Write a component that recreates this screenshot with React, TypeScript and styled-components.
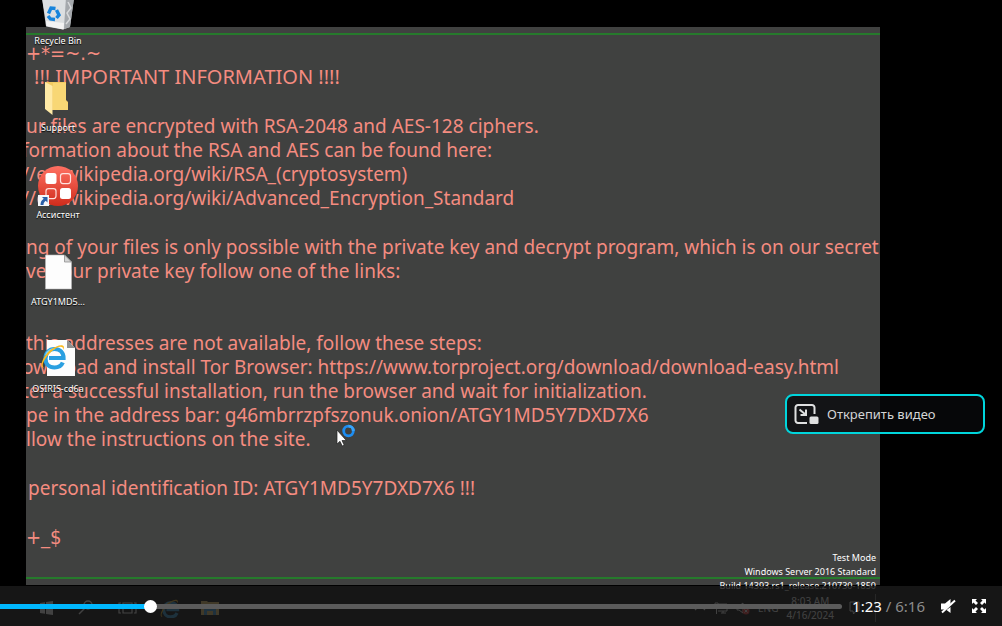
import React, { useState } from 'react';
import styled, { createGlobalStyle } from 'styled-components';

const GlobalStyle = createGlobalStyle`
  * { box-sizing: border-box; }
  body {
    margin: 0;
    background: #000;
    font-family: "Noto Sans", "Open Sans", sans-serif;
  }
`;

const Player = styled.main`
  position: relative;
  display: flex;
  flex-direction: column;
  min-height: 100vh;
  overflow: hidden;
  padding: 27px 122px 0 26px;
  background: #000;
`;

const Wallpaper = styled.section`
  position: relative;
  flex: 1;
  padding-top: 6px;
  padding-bottom: 6px;
  background: #404140;
  display: flex;
  flex-direction: column;
`;

const NoteFrame = styled.div`
  flex: 1;
  overflow: hidden;
  padding-top: 6px;
  border-top: 2px solid #267a2c;
  border-bottom: 2px solid #267a2c;
`;

const Paragraph = styled.p<{ $gap?: 'line' | 'double' }>`
  margin: ${(p) => (p.$gap === 'double' ? '48px' : p.$gap === 'line' ? '25px' : '0')} 0 0;
  color: #f58c80;
  font-size: 19px;
  line-height: 24px;
  white-space: nowrap;
`;

const Line = styled.span<{ $cut?: boolean; $indent?: boolean; $kind?: 'heading' | 'symbols' }>`
  display: block;
  margin-left: ${(p) => (p.$cut ? '-4px' : '0')};
  padding-left: ${(p) => (p.$kind === 'heading' ? '8px' : p.$indent ? '2px' : '0')};
  font-family: ${(p) => (p.$kind === 'symbols' ? '"DejaVu Sans Condensed", sans-serif' : 'inherit')};
  font-size: ${(p) => (p.$kind ? '20px' : 'inherit')};
`;

const Watermark = styled.div`
  position: absolute;
  right: 4px;
  bottom: -8px;
  color: #fff;
  font-size: 9px;
  line-height: 14px;
  text-align: right;
`;

const DesktopIcons = styled.ul`
  position: absolute;
  top: -8px;
  left: 26px;
  width: 64px;
  margin: 0;
  padding: 0;
  list-style: none;
  display: flex;
  flex-direction: column;
  gap: 32px;
`;

const DesktopIcon = styled.li`
  display: flex;
  flex-direction: column;
  align-items: center;
  gap: 3px;
  color: #fff;
  font-size: 9px;
  line-height: 12px;
  white-space: nowrap;
  text-shadow: 0 1px 1px #000;
`;

const Pointer = styled.svg`
  position: absolute;
  top: 424px;
  left: 336px;
`;

const Taskbar = styled.div`
  display: flex;
  align-items: center;
  height: 41px;
  padding: 5px 4px 0 10px;
  color: #fff;
`;

const TaskIcons = styled.div`
  display: flex;
  gap: 20px;
  flex: 1;
`;

const Tray = styled.div`
  display: flex;
  align-items: center;
  gap: 8px;
  padding-right: 15px;
  border-right: 1px solid #666;
  font-size: 10px;
`;

const Clock = styled.div`
  font-size: 10px;
  line-height: 14px;
  text-align: center;
`;

const Controls = styled.div`
  position: absolute;
  left: 0;
  right: 0;
  bottom: 0;
  height: 40px;
  display: flex;
  align-items: center;
  padding-right: 15px;
  background: rgba(26, 26, 26, 0.83);
`;

const Seek = styled.input<{ $played: number }>`
  appearance: none;
  flex: 1;
  min-width: 0;
  height: 14px;
  margin: 0 10px 0 0;
  background: transparent;
  cursor: pointer;

  &::-webkit-slider-runnable-track {
    height: 5px;
    border-radius: 0 3px 3px 0;
    background: linear-gradient(to right, #00b8ff ${(p) => p.$played}%, #5b5b5b ${(p) => p.$played}%);
  }
  &::-webkit-slider-thumb {
    appearance: none;
    width: 13px;
    height: 13px;
    margin-top: -4px;
    border-radius: 50%;
    background: #fff;
  }
`;

const Time = styled.div`
  color: #8c8c8c;
  font-size: 15px;
  line-height: 20px;
  white-space: nowrap;
`;

const Elapsed = styled.span`
  color: #fff;
`;

const IconButton = styled.button`
  display: flex;
  margin: 0 0 0 15px;
  padding: 0;
  border: 0;
  background: none;
  color: #fff;
  cursor: pointer;
`;

const UnpinButton = styled.button`
  position: absolute;
  top: 394px;
  right: 17px;
  width: 200px;
  height: 40px;
  display: flex;
  align-items: center;
  gap: 8px;
  padding: 0 6px;
  border: 2px solid #00d5dc;
  border-radius: 8px;
  background: rgba(8, 9, 11, 0.8);
  color: #d4d5d6;
  font-family: inherit;
  font-size: 13px;
  line-height: 20px;
  cursor: pointer;
`;

const BinIcon = () => (
  <svg width="40" height="40" viewBox="0 0 40 40" aria-hidden="true">
    <path d="M4 6h32l-4 29-7 2.500-17-3z" fill="#c9cccf" />
    <path d="M4 6h24l-2 31-17-3z" fill="#dcdfe1" />
    <path d="M28 6h8l-4 29-6 2z" fill="#a4a8ac" />
    <path d="M8 29l18 2-.5 6.500L8.500 34z" fill="#f3f3f3" />
    <path d="M30 10l3 6-4 5 3 6-4 5" fill="none" stroke="#d7d9db" strokeWidth="1.500" />
    <g fill="none" stroke="#1684dc" strokeWidth="3.400">
      <path d="M10.500 21.500l2.500-5.500 4.500.5" />
      <path d="M18.500 18l2.500 5-2.500 3" />
      <path d="M17 27.500l-4.500-.5-2.500-3" />
    </g>
  </svg>
);

const FolderIcon = () => (
  <svg width="40" height="40" viewBox="0 0 40 40" aria-hidden="true">
    <path d="M7 3h21v18l2 2v8H13z" fill="#f3cb62" />
    <path d="M15 4h13v18l2 2v7H15z" fill="#f8d775" />
    <path d="M7 3l7.500 4v29L7 30z" fill="#ffeaa6" />
  </svg>
);

const AssistantIcon = () => (
  <svg width="40" height="40" viewBox="0 0 40 40" aria-hidden="true">
    <defs>
      <linearGradient id="assistant" x1="0" y1="0" x2="0" y2="1">
        <stop offset="0" stopColor="#ff7062" />
        <stop offset="1" stopColor="#cf2c1c" />
      </linearGradient>
    </defs>
    <circle cx="20" cy="20" r="20" fill="url(#assistant)" />
    <rect x="7.500" y="7" width="11" height="11" rx="2.500" fill="#fff" />
    <rect x="22" y="22" width="11" height="11" rx="2.500" fill="#fff" />
    <g fill="none" stroke="#ffe0dc" strokeWidth="1.200">
      <rect x="22.500" y="7.600" width="10" height="10" rx="2.500" />
      <rect x="8" y="22.600" width="10" height="10" rx="2.500" />
    </g>
    <rect x="0" y="29" width="11" height="11" fill="#f5f7fa" />
    <path d="M4 31h5.500v5.500L7.700 34.700C6 36 5.500 37 5.500 39H2.500c0-3 1-4.800 3.200-6.300z" fill="#2a5fa8" />
  </svg>
);

const FileIcon = () => (
  <svg width="40" height="40" viewBox="0 0 40 40" aria-hidden="true">
    <path d="M7.500 2h19l7 7v27h-26z" fill="#fdfdfd" stroke="#b8b8b8" strokeWidth=".6" />
    <path d="M26.500 2v7h7z" fill="#d5d5d5" stroke="#8f8f8f" strokeWidth=".8" />
  </svg>
);

const EMark = () => (
  <>
    <path d="M8 20h14.500c0-5.500-3.500-9-9-9S4.500 15 4.500 20.500 8 29.500 13.500 29.500c4 0 7-2 8.300-5" fill="none" stroke="#2a9fe0" strokeWidth="4.200" />
    <path d="M5 17c1.500-4 4.500-6 8.500-6" fill="none" stroke="#7bd0f5" strokeWidth="2" />
    <path d="M3 29.500c-6 .5 0-13 7-18S25 5 22.500 12c0-5-6-4-12.500 2S-.5 28 3 29.500z" fill="#fbb91c" />
  </>
);

const HtmlFileIcon = () => (
  <svg width="40" height="40" viewBox="0 0 40 40" aria-hidden="true">
    <path d="M9 0h20l8 8v28H9z" fill="#fdfdfd" />
    <path d="M29 0v8h8z" fill="#8f8f8f" />
    <g transform="translate(3 -2)">
      <EMark />
    </g>
  </svg>
);

const desktopItems = [
  { label: 'Recycle Bin', icon: <BinIcon /> },
  { label: 'Support', icon: <FolderIcon /> },
  { label: 'Ассистент', icon: <AssistantIcon /> },
  { label: 'ATGY1MD5...', icon: <FileIcon /> },
  { label: 'OSIRIS-cd6a', icon: <HtmlFileIcon /> },
];

export default function App() {
  const [position, setPosition] = useState(174);

  return (
    <>
      <GlobalStyle />
      <Player>
        <Wallpaper>
          <NoteFrame>
            <Paragraph>
              <Line $kind="symbols">+*=~.~</Line>
              <Line $kind="heading">!!! IMPORTANT INFORMATION !!!!</Line>
            </Paragraph>
            <Paragraph $gap="line">
              <Line>ur files are encrypted with RSA-2048 and AES-128 ciphers.</Line>
              <Line $cut>formation about the RSA and AES can be found here:</Line>
              <Line $cut>//en.wikipedia.org/wiki/RSA_(cryptosystem)</Line>
              <Line $cut>//en.wikipedia.org/wiki/Advanced_Encryption_Standard</Line>
            </Paragraph>
            <Paragraph $gap="line">
              <Line>ng of your files is only possible with the private key and decrypt program, which is on our secret</Line>
              <Line>ve your private key follow one of the links:</Line>
            </Paragraph>
            <Paragraph $gap="double">
              <Line>this addresses are not available, follow these steps:</Line>
              <Line $cut>ownload and install Tor Browser: https://www.torproject.org/download/download-easy.html</Line>
              <Line $cut>ter a successful installation, run the browser and wait for initialization.</Line>
              <Line>pe in the address bar: g46mbrrzpfszonuk.onion/ATGY1MD5Y7DXD7X6</Line>
              <Line>llow the instructions on the site.</Line>
            </Paragraph>
            <Paragraph $gap="line">
              <Line $indent>personal identification ID: ATGY1MD5Y7DXD7X6 !!!</Line>
            </Paragraph>
            <Paragraph $gap="line">
              <Line $kind="symbols">+_$</Line>
            </Paragraph>
          </NoteFrame>
          <Watermark>
            <div>Test Mode</div>
            <div>Windows Server 2016 Standard</div>
            <div>Build 14393.rs1_release.210730-1850</div>
          </Watermark>
        </Wallpaper>

        <Taskbar>
          <TaskIcons>
            <svg width="21" height="20" viewBox="0 0 21 20" fill="#fff" aria-hidden="true">
              <path d="M4 5l5-.8v5.300H4zM10 4l7-1v6.500h-7zM4 10.500h5v5.300L4 15zM10 10.500h7V17l-7-1z" />
            </svg>
            <svg width="21" height="20" viewBox="0 0 21 20" fill="none" stroke="#fff" strokeWidth="1.500" aria-hidden="true">
              <circle cx="11" cy="7" r="4" />
              <path d="M8 10l-6 6" />
            </svg>
            <svg width="21" height="20" viewBox="0 0 21 20" fill="none" stroke="#fff" strokeWidth="1.200" aria-hidden="true">
              <path d="M5 5h9v10H5zM3 5H1v10h2M16 5h2v10h-2" />
            </svg>
            <svg width="21" height="20" viewBox="-1 5 26 26" aria-hidden="true">
              <EMark />
            </svg>
            <svg width="21" height="20" viewBox="0 0 21 20" aria-hidden="true">
              <path d="M1 3h6l1 1h11v13H1z" fill="#f5d06a" />
              <path d="M4 17v-7h12v7h-3v-4H7v4z" fill="#3aa0e8" />
            </svg>
          </TaskIcons>
          <Tray>
            <svg width="12" height="16" viewBox="0 0 12 16" fill="none" stroke="#fff" strokeWidth="1.200" aria-hidden="true">
              <path d="M1 10l5-5 5 5" />
            </svg>
            <svg width="14" height="16" viewBox="0 0 14 16" fill="none" stroke="#fff" aria-hidden="true">
              <path d="M4 4h9v7H4M7 13h5M9 11v2M1 3v5h3V3zM2.500 8v6" />
            </svg>
            <svg width="14" height="16" viewBox="0 0 14 16" fill="none" stroke="#fff" aria-hidden="true">
              <path d="M1 6h2l4-3v10l-4-3H1z" />
              <circle cx="10" cy="11" r="3.500" fill="#f03030" stroke="none" />
              <path d="M8.500 9.500l3 3m0-3l-3 3" />
            </svg>
            <span>ENG</span>
            <Clock>
              <div>8:03 AM</div>
              <div>4/16/2024</div>
            </Clock>
            <svg width="18" height="16" viewBox="0 0 18 16" fill="none" stroke="#fff" aria-hidden="true">
              <path d="M8 2h9v9h-3l-2.500 3-.5-3H8z" />
            </svg>
          </Tray>
        </Taskbar>

        <DesktopIcons>
          {desktopItems.map((item) => (
            <DesktopIcon key={item.label}>
              {item.icon}
              <span>{item.label}</span>
            </DesktopIcon>
          ))}
        </DesktopIcons>

        <Pointer width="20" height="24" viewBox="0 0 20 24" aria-hidden="true">
          <path d="M1 6v14l3-2.700L6.200 22l2-.9L6 16.500h4.300z" fill="#fff" stroke="#222" strokeWidth=".7" />
          <circle cx="12.500" cy="7" r="4.800" fill="none" stroke="#1d8df2" strokeWidth="2.800" />
          <path d="M12.500 2.200a4.800 4.800 0 0 1 4.800 4.800" fill="none" stroke="#38a4fb" strokeWidth="2.800" />
        </Pointer>

        <UnpinButton type="button">
          <svg width="26" height="24" viewBox="0 0 26 24" fill="none" stroke="#dfe0e0" strokeWidth="2" aria-hidden="true">
            <path d="M14 21H5a2.500 2.500 0 0 1-2.500-2.500v-13A2.500 2.500 0 0 1 5 3h14a2.500 2.500 0 0 1 2.500 2.500V12" />
            <path d="M6.500 7.500l6 5M13 7.500V13H7.500" />
            <rect x="16.500" y="14.500" width="9" height="7.500" rx="1.500" fill="#dfe0e0" stroke="none" />
          </svg>
          Открепить видео
        </UnpinButton>

        <Controls>
          <Seek
            type="range"
            aria-label="Перемотка"
            min={0}
            max={1000}
            value={position}
            $played={position / 10}
            onChange={(e) => setPosition(Number(e.target.value))}
          />
          <Time>
            <Elapsed>1:23</Elapsed> / 6:16
          </Time>
          <IconButton type="button" aria-label="Включить звук">
            <svg width="16" height="16" viewBox="0 0 16 16" aria-hidden="true">
              <path d="M1 5.500h4L10.500 1v5L4.500 11.500H1zM10.500 9v6L6.500 12z" fill="#fff" />
              <path d="M2 14.500L15 2.500" stroke="#fff" strokeWidth="2" />
            </svg>
          </IconButton>
          <IconButton type="button" aria-label="Во весь экран">
            <svg width="16" height="16" viewBox="0 0 16 16" fill="#fff" aria-hidden="true">
              <path d="M1 1h5L4.500 2.500 7 5 5 7 2.500 4.500 1 6zM15 1v5l-1.500-1.500L11 7 9 5l2.500-2.500L10 1zM1 15v-5l1.500 1.500L5 9l2 2-2.500 2.500L6 15zM15 15h-5l1.500-1.500L9 11l2-2 2.500 2.500L15 10z" />
            </svg>
          </IconButton>
        </Controls>
      </Player>
    </>
  );
}
